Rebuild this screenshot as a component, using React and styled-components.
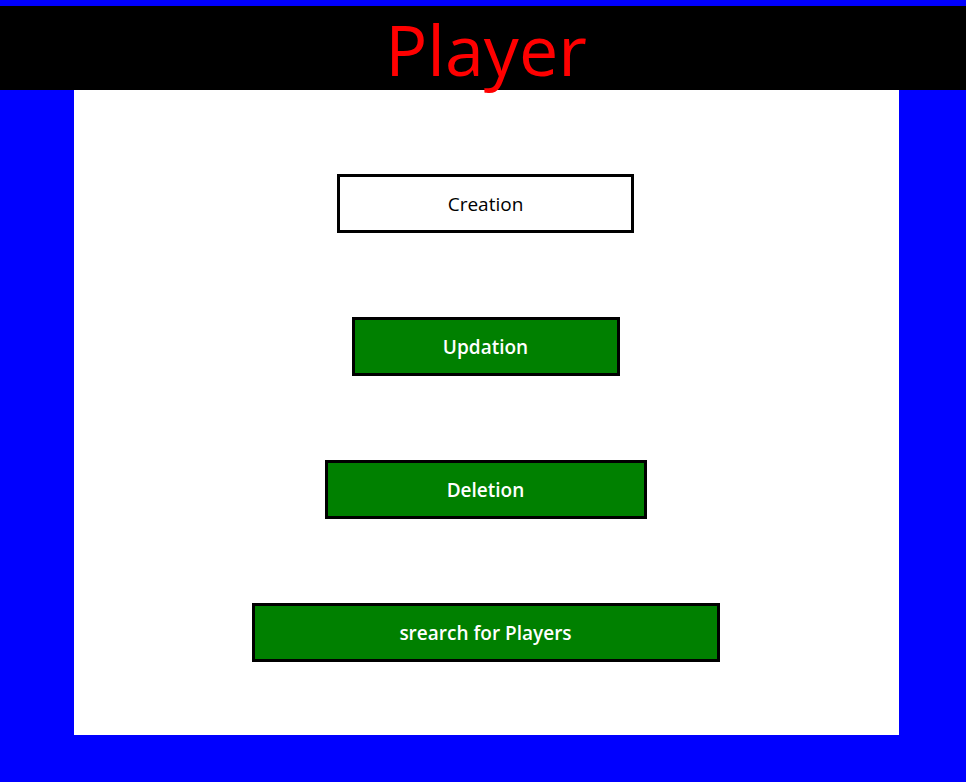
import styled, { createGlobalStyle } from 'styled-components';

const GlobalStyle = createGlobalStyle`
  html, body {
    margin: 0;
    padding: 0;
    background: #0000ff;
    font-family: "Open Sans", "DejaVu Sans", sans-serif;
  }
  body {
    padding-top: 6px;
    min-height: 782px;
    box-sizing: border-box;
  }
`;

const Header = styled.header`
  height: 84px;
  background: #000;
  display: flex;
  justify-content: center;
  align-items: center;
`;

const Title = styled.h1`
  margin: 2px 0 0 6px;
  color: #ff0000;
  font-size: 70px;
  font-weight: 400;
  line-height: 1;
`;

const Panel = styled.main`
  margin-left: 74px;
  width: 825px;
  background: #fff;
  box-sizing: border-box;
  padding: 84px 2px 73px 0;
  display: flex;
  flex-direction: column;
  align-items: center;
  gap: 84px;
`;

const ActionButton = styled.button`
  width: ${(p) => p.$width}px;
  height: 59px;
  box-sizing: border-box;
  border: 3px solid #000;
  background: ${(p) => (p.$primary ? '#008000' : '#fff')};
  color: ${(p) => (p.$primary ? '#fff' : '#000')};
  font-family: "Open Sans", "DejaVu Sans", sans-serif;
  font-size: 19px;
  font-weight: ${(p) => (p.$primary ? 600 : 500)};
  cursor: pointer;
  padding: 1px 0 0;
`;

function App() {
  return (
    <>
      <GlobalStyle />
      <Header>
        <Title>Player</Title>
      </Header>
      <Panel>
        <ActionButton $width={297}>Creation</ActionButton>
        <ActionButton $primary $width={268}>Updation</ActionButton>
        <ActionButton $primary $width={322}>Deletion</ActionButton>
        <ActionButton $primary $width={468}>srearch for Players</ActionButton>
      </Panel>
    </>
  );
}

export default App;
